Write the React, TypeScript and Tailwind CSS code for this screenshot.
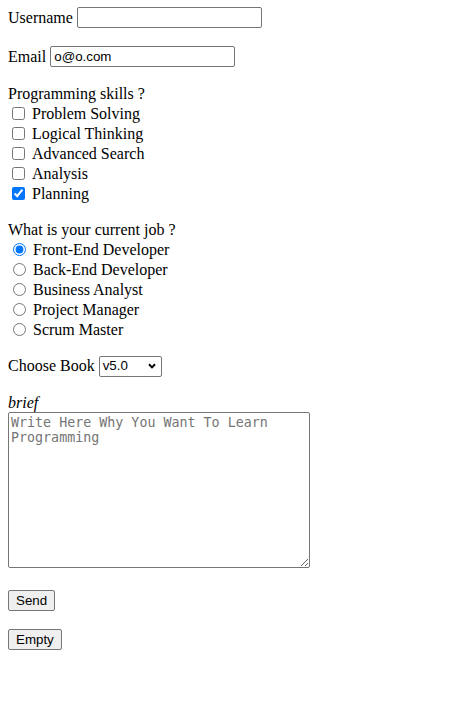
import { useState } from "react";

const skills = ["Problem Solving", "Logical Thinking", "Advanced Search", "Analysis", "Planning"];
const jobs = ["Front-End Developer", "Back-End Developer", "Business Analyst", "Project Manager", "Scrum Master"];

const field =
  "h-[21px] border border-[#767676] rounded-[2px] bg-white px-[3px] text-[13.33px] font-['Liberation_Sans',Arial,sans-serif] text-black outline-none";
const btn =
  "h-[21px] border border-[#767676] rounded-[2px] bg-[#efefef] px-[7px] text-[13.33px] font-['Liberation_Sans',Arial,sans-serif] text-black leading-none";

export default function App() {
  const [checked, setChecked] = useState<string[]>(["Planning"]);
  const [job, setJob] = useState("Front-End Developer");

  function toggle(s: string) {
    setChecked(checked.includes(s) ? checked.filter((x) => x !== s) : [...checked, s]);
  }

  return (
    <form className="min-h-screen bg-white px-2 pt-[7px] text-[16px] text-black font-['Liberation_Serif','Times_New_Roman',serif]">
      {/* Username / Email */}
      <div className="flex items-center h-[21px]">
        <label>Username</label>
        <input type="text" className={`${field} ml-[4px] w-[185px]`} />
      </div>
      <div className="flex items-center h-[21px] mt-[18px]">
        <label>Email</label>
        <input type="email" defaultValue="o@o.com" className={`${field} ml-[4px] w-[185px]`} />
      </div>

      {/* Skills */}
      <div className="mt-[17px]">
        <div className="h-[20px] flex items-center">Programming skills ?</div>
        {skills.map((s) => (
          <label key={s} className="h-[20px] flex items-center">
            <input
              type="checkbox"
              checked={checked.includes(s)}
              onChange={() => toggle(s)}
              className="w-[13px] h-[13px] ml-[4px] mr-[3px] -mt-[1px]"
            />
            <span className="ml-[4px]">{s}</span>
          </label>
        ))}
      </div>

      {/* Job */}
      <div className="mt-[16px]">
        <div className="h-[20px] flex items-center">What is your current job ?</div>
        {jobs.map((j) => (
          <label key={j} className="h-[20px] flex items-center">
            <input
              type="radio"
              name="job"
              checked={job === j}
              onChange={() => setJob(j)}
              className="w-[13px] h-[13px] ml-[5px] mr-[3px] -mt-[1px]"
            />
            <span className="ml-[4px]">{j}</span>
          </label>
        ))}
      </div>

      {/* Book */}
      <div className="flex items-center h-[20px] mt-[16px]">
        <label>Choose Book</label>
        <span className={`${field} ml-[4px] w-[63px] h-[19px] flex items-center justify-between pl-[3px] pr-[5px]`}>
          <span>v5.0</span>
          <svg width="8" height="6" viewBox="0 0 8 6">
            <path d="M1 1.2 L4 4.4 L7 1.2" fill="none" stroke="#000" strokeWidth="2" />
          </svg>
        </span>
      </div>

      {/* Brief */}
      <div className="mt-[18px] h-[18px] flex items-center italic">brief</div>
      <textarea
        placeholder="Write Here Why You Want To Learn Programming"
        className="block w-[302px] h-[156px] border border-[#767676] rounded-[2px] p-[2px] text-[13.33px] leading-[15px] font-['DejaVu_Sans_Mono',monospace] placeholder:text-[#757575] resize outline-none"
      />

      <button type="button" className={`${btn} block mt-[22px]`}>
        Send
      </button>
      <button type="reset" className={`${btn} block mt-[18px]`}>
        Empty
      </button>
    </form>
  );
}
